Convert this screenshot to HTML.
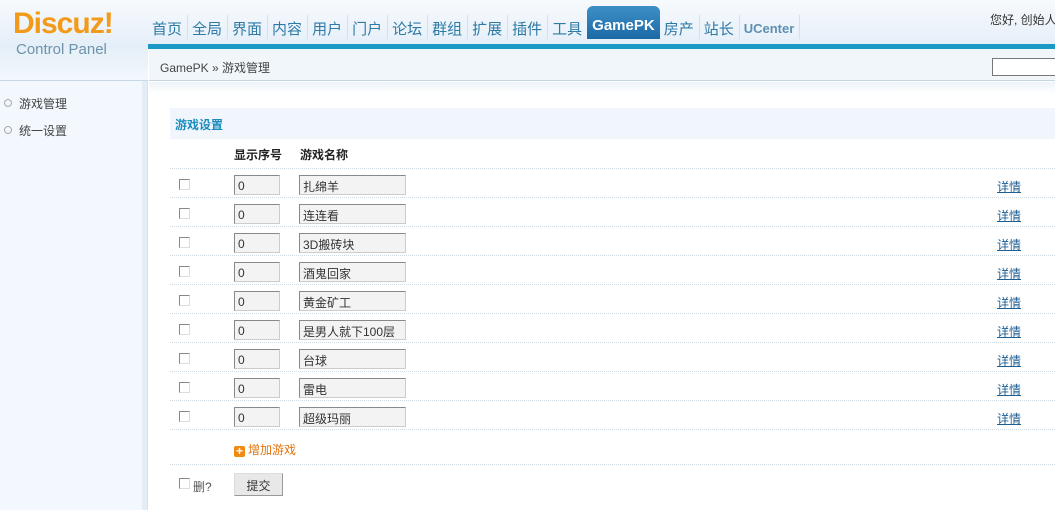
<!DOCTYPE html>
<html><head><meta charset="utf-8"><style>
*{margin:0;padding:0;box-sizing:border-box}
body{width:1055px;height:510px;overflow:hidden;background:#fff;font-family:"Liberation Sans","Noto Sans CJK SC",sans-serif;font-size:12px;color:#333;position:relative}
.hdr{position:absolute;left:0;top:0;width:1055px;height:48px;background:linear-gradient(#f7fafd,#e4eef8)}
.logo{position:absolute;left:13px;top:7px;font:bold 30px "Liberation Sans",sans-serif;color:#f39a1a;letter-spacing:-1px;z-index:3}
.cp{position:absolute;left:16px;top:41px;font-size:15px;color:#6d93ab;z-index:3}
.nav{position:absolute;left:148px;top:11px;height:30px;display:flex;font-size:15px;color:#2e7aa6;z-index:2}
.nav span{padding:3px 5px 0 4px;height:24px;margin-top:4px;border-right:1px solid #d3e0ec}
.nav .on{background:linear-gradient(#3d8fc6,#1d6aa6);color:#fff;font-weight:bold;border-radius:6px 6px 0 0;margin-top:-5px;height:33px;padding:11px 5px 0;border:none;margin-left:-1px}
.nav .uc{font-weight:bold;font-size:13px;color:#5f8fb0;padding-top:6px}
.hi{position:absolute;left:990px;top:11px;font-size:12px;color:#333;white-space:nowrap}
.bl{position:absolute;left:148px;top:44px;width:907px;height:5px;background:#1a98c6}
.side{position:absolute;left:0;top:48px;width:148px;height:462px;background:#f2f8fd}
.side:before{content:"";position:absolute;left:0;top:0;width:148px;height:33px;background:linear-gradient(#e6f0f8,#f2f8fd)}
.sline{position:absolute;left:0;top:80px;width:148px;height:1px;background:#c7d8e4}
.sband{position:absolute;left:142px;top:81px;width:6px;height:429px;background:#e2edf6;border-right:1px solid #d5e3ee}
.sitem{position:absolute;left:19px;font-size:12px;color:#444}
.sitem:before{content:"";position:absolute;left:-15px;top:4px;width:6px;height:6px;border:1px solid #aaa;border-radius:50%}
.bc{position:absolute;left:149px;top:49px;width:906px;height:32px;background:#f1f6fb;border-bottom:1px solid #c5d6e2;padding:10px 0 0 11px;font-size:12px;color:#444}
.sb{position:absolute;left:992px;top:58px;width:70px;height:18px;border:1px solid #777;background:#fff}
.fade{position:absolute;left:149px;top:82px;width:906px;height:12px;background:linear-gradient(#eef4f9,#fff)}
.tt{position:absolute;left:170px;top:108px;width:885px;height:31px;background:#f0f6fb;color:#1a8bbf;font-weight:bold;font-size:12px;padding:8px 0 0 5px}
.row{position:absolute;left:170px;width:885px;height:29px;border-bottom:1px dotted #cfd9e2}
.th{position:absolute;font-weight:bold;font-size:12px;color:#222}
.cb{position:absolute;left:9px;top:10px;width:11px;height:11px;border:1px solid #888;border-right-color:#ddd;border-bottom-color:#ddd;background:#fff}
.n{position:absolute;left:64px;top:6px;width:46px;height:20px;border:1px solid #888;border-right-color:#ccc;border-bottom-color:#ccc;background:#f3f3f3;padding:3px 0 0 3px;font-size:12px}
.g{position:absolute;left:129px;top:6px;width:107px;height:20px;border:1px solid #888;border-right-color:#ccc;border-bottom-color:#ccc;background:#f3f3f3;padding:2px 0 0 3px;font-size:12px;white-space:nowrap}
.d{position:absolute;left:827px;top:9px;color:#1d5e93;text-decoration:underline;font-size:12px}
.add{position:absolute;left:234px;top:441px;color:#e3740d;font-size:12px}
.add i{display:inline-block;width:11px;height:11px;background:#f08a12;border-radius:2px;color:#fff;font-style:normal;font-weight:bold;font-size:12px;line-height:11px;text-align:center;vertical-align:-1px;margin-right:3px}
.btn{position:absolute;left:234px;top:473px;width:49px;height:23px;background:#e8e8e8;border:1px solid #999;border-top-color:#ddd;border-left-color:#ddd;text-align:center;padding-top:3px;font-size:12px}
</style></head><body>
<div class="hdr"></div>
<div class="side"></div><div class="sline"></div><div class="sband"></div>
<div class="logo">Discuz!</div>
<div class="cp">Control Panel</div>
<div class="nav"><span>首页</span><span>全局</span><span>界面</span><span>内容</span><span>用户</span><span>门户</span><span>论坛</span><span>群组</span><span>扩展</span><span>插件</span><span>工具</span><span class="on">GamePK</span><span>房产</span><span>站长</span><span class="uc">UCenter</span></div>
<div class="hi">您好, 创始人</div>
<div class="bl"></div>
<div class="sitem" style="top:95px">游戏管理</div>
<div class="sitem" style="top:122px">统一设置</div>
<div class="bc">GamePK » 游戏管理</div>
<div class="sb"></div>
<div class="fade"></div>
<div class="tt">游戏设置</div>
<div class="row" style="top:140px"><span class="th" style="left:64px;top:6px">显示序号</span><span class="th" style="left:130px;top:6px">游戏名称</span></div>
<div class="row" style="top:169px"><i class="cb"></i><div class="n">0</div><div class="g">扎绵羊</div><a class="d">详情</a></div>
<div class="row" style="top:198px"><i class="cb"></i><div class="n">0</div><div class="g">连连看</div><a class="d">详情</a></div>
<div class="row" style="top:227px"><i class="cb"></i><div class="n">0</div><div class="g">3D搬砖块</div><a class="d">详情</a></div>
<div class="row" style="top:256px"><i class="cb"></i><div class="n">0</div><div class="g">酒鬼回家</div><a class="d">详情</a></div>
<div class="row" style="top:285px"><i class="cb"></i><div class="n">0</div><div class="g">黄金矿工</div><a class="d">详情</a></div>
<div class="row" style="top:314px"><i class="cb"></i><div class="n">0</div><div class="g">是男人就下100层</div><a class="d">详情</a></div>
<div class="row" style="top:343px"><i class="cb"></i><div class="n">0</div><div class="g">台球</div><a class="d">详情</a></div>
<div class="row" style="top:372px"><i class="cb"></i><div class="n">0</div><div class="g">雷电</div><a class="d">详情</a></div>
<div class="row" style="top:401px"><i class="cb"></i><div class="n">0</div><div class="g">超级玛丽</div><a class="d">详情</a></div>
<div class="row" style="top:430px;height:35px"></div>
<div class="add"><i>+</i>增加游戏</div>
<div style="position:absolute;left:179px;top:478px;width:11px;height:11px;border:1px solid #888;border-right-color:#ddd;border-bottom-color:#ddd"></div>
<div style="position:absolute;left:193px;top:478px;color:#555">删?</div>
<div class="btn">提交</div>
</body></html>
